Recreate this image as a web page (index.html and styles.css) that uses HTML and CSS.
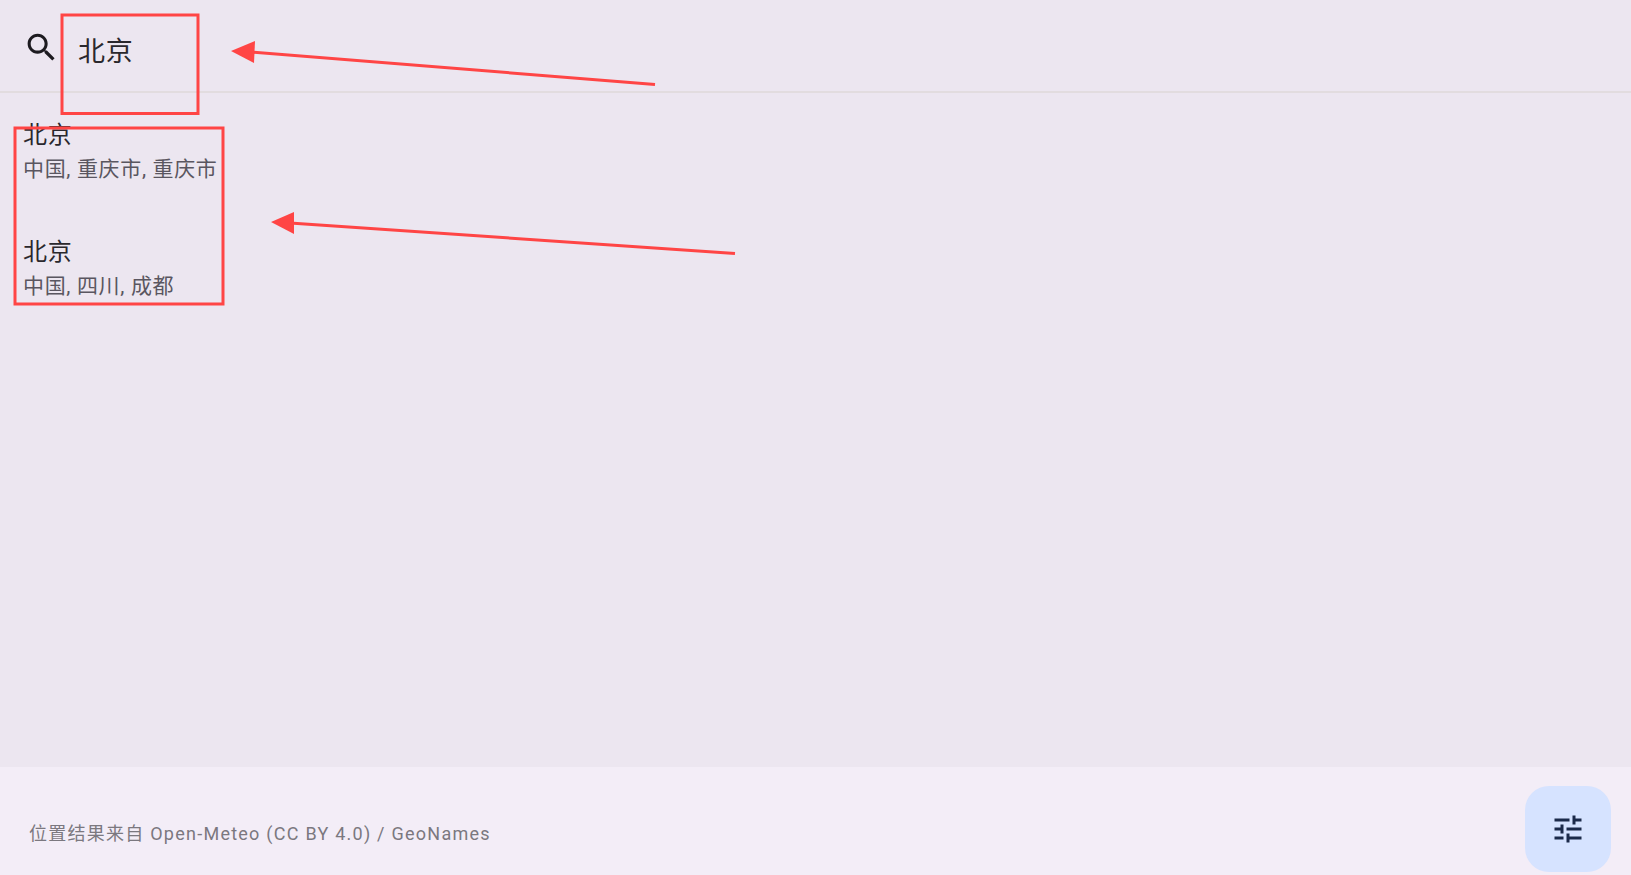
FILE: index.html
```html
<!DOCTYPE html>
<html lang="zh-CN">

<head>
    <meta charset="UTF-8">
    <meta name="viewport" content="width=device-width, initial-scale=1.0">
    <title>位置搜索</title>
    <link rel="stylesheet" href="styles.css">
</head>

<body>
    <div class="page">
        <header class="search-bar">
            <svg class="search-icon" viewBox="0 0 24 24">
                <path d="M15.5 14h-.79l-.28-.27C15.41 12.59 16 11.11 16 9.5 16 5.91 13.09 3 9.5 3S3 5.91 3 9.5 5.91 16 9.5 16c1.61 0 3.09-.59 4.23-1.57l.27.28v.79l5 4.99L20.49 19l-4.99-5zm-6 0C7.01 14 5 11.99 5 9.5S7.01 5 9.5 5 14 7.01 14 9.5 11.99 14 9.5 14z"/>
            </svg>
            <span class="search-text">北京</span>
        </header>

        <ul class="results">
            <li class="result">
                <div class="result-title">北京</div>
                <div class="result-sub">中国, 重庆市, 重庆市</div>
            </li>
            <li class="result">
                <div class="result-title">北京</div>
                <div class="result-sub">中国, 四川, 成都</div>
            </li>
        </ul>

        <footer class="footer">
            <span class="credit">位置结果来自 Open-Meteo (CC BY 4.0) / GeoNames</span>
            <button class="fab">
                <svg class="fab-icon" viewBox="0 0 24 24">
                    <path d="M3 17v2h6v-2H3zM3 5v2h10V5H3zm10 16v-2h8v-2h-8v-2h-2v6h2zM7 9v2H3v2h4v2h2V9H7zm14 4v-2H11v2h10zm-6-4h2V7h4V5h-4V3h-2v6z"/>
                </svg>
            </button>
        </footer>
    </div>

    <!-- red annotations drawn over the screenshot -->
    <svg class="marks" viewBox="0 0 1631 875">
        <rect class="mark-box" x="62" y="15" width="136" height="98.5"/>
        <rect class="mark-box" x="15" y="128" width="208" height="176"/>
        <line class="mark-line" x1="655" y1="84.5" x2="250" y2="52"/>
        <polygon class="mark-head" points="231,51 255,41 254,63"/>
        <line class="mark-line" x1="735" y1="253.5" x2="290" y2="223"/>
        <polygon class="mark-head" points="271,222 294,212 294,234"/>
    </svg>
</body>

</html>
```

FILE: styles.css
```css
* {
    box-sizing: border-box;
}

html,
body {
    height: 100%;
}

body {
    margin: 0;
    background: #ece6f0;
    color: #2a282d;
    font-family: Roboto, "Noto Sans CJK SC", sans-serif;
    overflow: hidden;
}

.page {
    height: 100%;
    display: flex;
    flex-direction: column;
}

.search-bar {
    height: 93px;
    flex-shrink: 0;
    display: flex;
    align-items: flex-start;
    padding: 29px 0 0 23px;
    border-bottom: 2px solid #e2dcdf;
}

.search-icon {
    width: 37px;
    height: 37px;
    fill: #1d1b20;
}

.search-text {
    margin-left: 18px;
    margin-top: 2px;
    font-size: 27px;
    line-height: 42px;
    letter-spacing: 0.75px;
}

.results {
    flex: 1;
    list-style: none;
    margin: 0;
    padding: 24px 0 0 23px;
}

.result {
    height: 117px;
}

.result-title {
    font-size: 24px;
    line-height: 36px;
    letter-spacing: 0.75px;
}

.result-sub {
    font-size: 21px;
    line-height: 32px;
    letter-spacing: 0.65px;
    color: #5a5660;
}

.footer {
    height: 108px;
    flex-shrink: 0;
    display: flex;
    align-items: flex-start;
    justify-content: space-between;
    padding: 18.5px 20px 0 29px;
    background: #f3edf7;
}

.credit {
    margin-top: 35.5px;
    font-size: 18px;
    line-height: 26px;
    letter-spacing: 1.25px;
    color: #7b787f;
}

.fab {
    width: 86px;
    height: 86px;
    display: flex;
    align-items: center;
    justify-content: center;
    padding: 0;
    border: none;
    border-radius: 24px;
    background: #d6e3ff;
}

.fab-icon {
    width: 36px;
    height: 36px;
    fill: #1b2a4a;
}

.marks {
    position: absolute;
    top: 0;
    left: 0;
    width: 1631px;
    height: 875px;
    pointer-events: none;
}

.mark-box {
    fill: none;
    stroke: #ff4545;
    stroke-width: 3;
}

.mark-line {
    stroke: #ff4545;
    stroke-width: 3;
}

.mark-head {
    fill: #ff4545;
}
```
